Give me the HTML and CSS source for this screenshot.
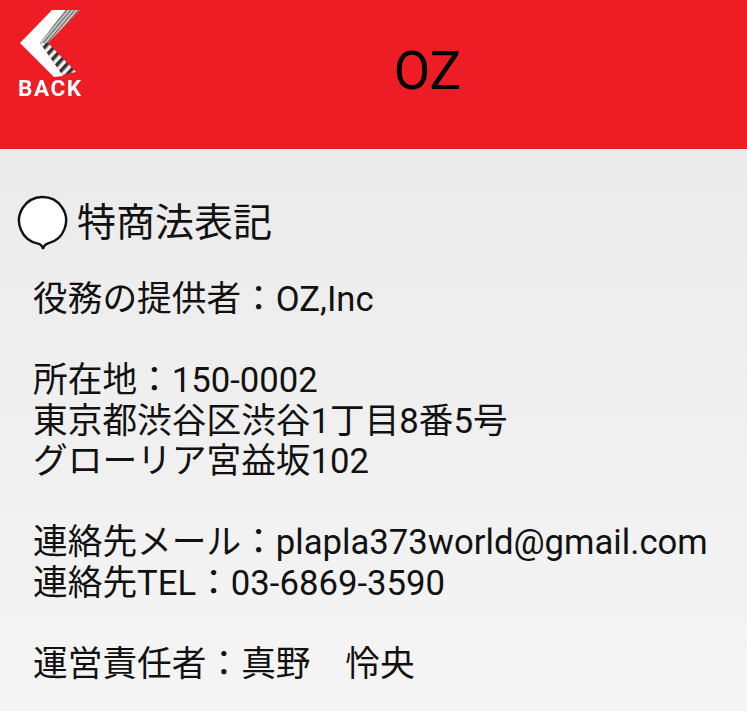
FILE: index.html
```html
<!DOCTYPE html>
<html lang="ja">
<head>
    <meta charset="UTF-8">
    <title>OZ</title>
    <link rel="stylesheet" href="styles.css">
</head>
<body>
    <header class="top-bar">
        <a class="back-btn" href="#">
            <svg class="back-icon" width="64" height="70" viewBox="17 8 64 70">
                <defs>
                    <pattern id="stripes-top" width="3" height="3" patternUnits="userSpaceOnUse" patternTransform="rotate(-50)">
                        <rect width="3" height="3" fill="#d8d8d8"/>
                        <rect width="3" height="1.4" fill="#6a6a6a"/>
                    </pattern>
                    <pattern id="stripes-bottom" width="7" height="7" patternUnits="userSpaceOnUse" patternTransform="rotate(42)">
                        <rect width="7" height="7" fill="#f0f0f0"/>
                        <rect width="3.5" height="7" fill="#333"/>
                    </pattern>
                </defs>
                <path d="M64 10 L80 10 L48 43 L40 43 Z" fill="url(#stripes-top)"/>
                <path d="M40 43 L48 43 L76 72 L62 75 Z" fill="url(#stripes-bottom)"/>
                <path d="M52 10 L65 10 L40 43 L63 76 L54 77 L20 43 Z" fill="#fff"/>
            </svg>
            <span class="back-label">BACK</span>
        </a>
        <h1 class="top-title">OZ</h1>
    </header>
    <main class="content">
        <h2 class="section-title">
            <svg class="bubble" width="52" height="56" viewBox="0 0 52 56">
                <path d="M21 48.6 A23.5 23.5 0 1 1 31 48.4 Q27 49.5 26 54 Q25 49.5 21 48.6 Z" fill="#fff" stroke="#111" stroke-width="2.4"/>
            </svg>
            特商法表記
        </h2>
        <p class="info">役務の提供者：OZ,Inc<br><br>所在地：150-0002<br>東京都渋谷区渋谷1丁目8番5号<br>グローリア宮益坂102<br><br>連絡先メール：plapla373world@gmail.com<br>連絡先TEL：03-6869-3590<br><br>運営責任者：真野　怜央</p>
    </main>
</body>
</html>
```
FILE: styles.css
```css
* {
    margin: 0;
    padding: 0;
    box-sizing: border-box;
}

html, body {
    height: 100%;
}

body {
    font-family: Roboto, "Noto Sans CJK JP", sans-serif;
    background: linear-gradient(180deg, #e8e8e8, #f5f5f5);
    color: #111;
    overflow: hidden;
}

.top-bar {
    height: 149px;
    background-color: #ee1c25;
    position: relative;
    display: flex;
    align-items: center;
    justify-content: center;
}

.top-title {
    font-size: 53px;
    font-weight: 400;
    color: #000;
    margin-left: 108px;
    margin-bottom: 8px;
}

.back-btn {
    position: absolute;
    left: 17px;
    top: 8px;
    width: 70px;
    text-decoration: none;
    filter: blur(0.5px);
}

.back-icon {
    display: block;
}

.back-label {
    display: block;
    color: #fff;
    font-size: 22.5px;
    font-weight: 700;
    line-height: 20px;
    letter-spacing: 1.6px;
    margin-left: 1px;
}

.content {
    padding: 44px 0 0 17px;
}

.section-title {
    display: flex;
    align-items: center;
    gap: 8px;
    font-size: 39px;
    font-weight: 400;
    line-height: 60px;
}

.info {
    padding: 26px 0 0 16px;
    font-size: 34.7px;
    line-height: 40.5px;
}
```
